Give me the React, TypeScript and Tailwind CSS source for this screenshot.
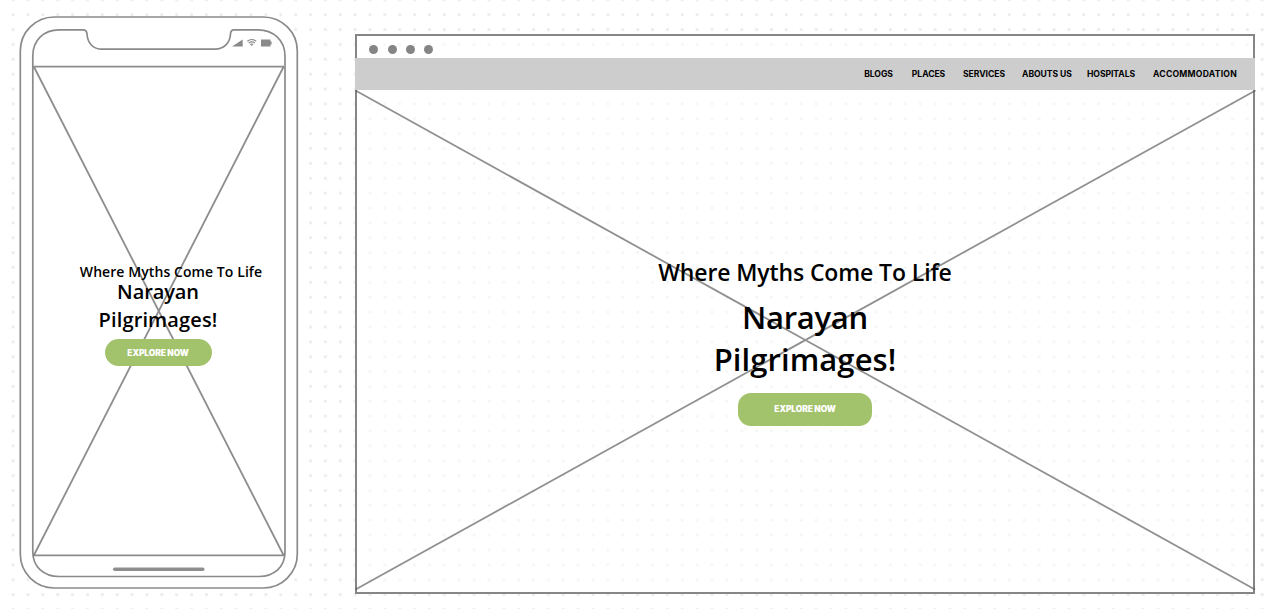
import React from "react";

const navItems = [
  { label: "BLOGS", style: "w-[29px] mr-[19px] tracking-[-0.05px]" },
  { label: "PLACES", style: "w-[33px] mr-[18px] tracking-[-0.05px]" },
  { label: "SERVICES", style: "w-[42px] mr-[17px] tracking-[-0.05px]" },
  { label: "ABOUTS US", style: "w-[50px] mr-[15px] tracking-[-0.05px]" },
  { label: "HOSPITALS", style: "w-[48px] mr-[18px] tracking-[-0.05px]" },
  { label: "ACCOMMODATION", style: "w-[84px] tracking-[0.24px]" },
];

function DotGrid() {
  return (
    <svg className="absolute inset-0 h-full w-full" aria-hidden="true">
      <defs>
        <pattern id="dots" x="5.7" y="7.25" width="14.87" height="14.87" patternUnits="userSpaceOnUse">
          <rect x="5.9" y="5.9" width="3" height="3" rx="0.8" fill="#ededef" />
        </pattern>
      </defs>
      <rect width="100%" height="100%" fill="url(#dots)" />
    </svg>
  );
}

function PhoneFrame() {
  return (
    <svg className="absolute inset-0" width="300" height="609" viewBox="0 0 300 609" fill="none" aria-hidden="true">
      <rect x="20.3" y="17" width="277" height="571" rx="34" fill="#fff" stroke="#8a8a8a" strokeWidth="1.7" />
      <path
        d="M59 29.8H83Q86.7 29.8 87 34C87.5 43 93 49.2 102 49.2H215C224 49.2 230 43 230.5 34Q230.7 29.8 234 29.8H258C273 29.8 285 40 285 56V552C285 567 274 576.5 259 576.5H59C44 576.5 32.8 567 32.8 552V56C32.8 40 44 29.8 59 29.8Z"
        stroke="#8a8a8a"
        strokeWidth="1.7"
      />
      <path
        d="M33.5 66.7H284M33.5 555.3H284M34 67L283.5 555M283.5 67L34 555"
        stroke="#555"
        strokeOpacity=".67"
        strokeWidth="1.8"
      />
      <path d="M114.8 569.3H202.7" stroke="#8e8e8e" strokeWidth="3.6" strokeLinecap="round" />
      <path d="M232 46.5L242.7 39.5V46.5Z" fill="#8a8a8a" />
      <path
        d="M247.3 41.2Q251.7 37.9 256.2 41.2M248.7 43Q251.7 40.8 254.8 43M250.2 44.6Q251.7 43.6 253.2 44.6"
        stroke="#8a8a8a"
        strokeWidth="1.1"
      />
      <path d="M250.8 45.3L251.7 46.3L252.7 45.3Z" fill="#8a8a8a" />
      <path d="M261 39.4H270.5V41.5H271.6V44.5H270.5V46.5H261Z" fill="#8a8a8a" />
    </svg>
  );
}

function Phone() {
  return (
    <section className="relative h-full w-[300px] shrink-0">
      <PhoneFrame />
      <div className="relative flex flex-col items-center pt-[266px] pl-[16px] text-center font-['Open_Sans',sans-serif] font-semibold text-black">
        <p className="ml-[26px] text-[14px] leading-3 tracking-[0.08px] whitespace-nowrap">Where Myths Come To Life</p>
        <h1 className="text-[20px] leading-7">
          <span className="tracking-[-0.1px]">Narayan</span>
          <br />
          <span className="tracking-[0.13px]">Pilgrimages!</span>
        </h1>
        <button className="mt-[5px] h-[27px] w-[107px] rounded-[13.5px] bg-[#a3c26c] font-['Inter',sans-serif] text-[8.4px] leading-[28px] font-black tracking-[-0.08px] text-white">
          EXPLORE NOW
        </button>
      </div>
    </section>
  );
}

function Browser() {
  return (
    <section className="relative mt-[34px] ml-[55px] flex h-[560px] w-[900px] shrink-0 flex-col">
      <div className="absolute inset-0 border-2 border-[#868686] bg-white/50" />
      <div className="relative flex h-[24px] items-center gap-[9.4px] pt-[7px] pl-[14.2px]">
        {[0, 1, 2, 3].map((dot) => (
          <span key={dot} className="size-[9px] rounded-full bg-[#858585]" />
        ))}
      </div>
      <nav className="relative flex h-[32px] items-center justify-end bg-[#cdcdcd] pr-[18px] font-['Inter',sans-serif] text-[8.6px] font-bold text-black">
        {navItems.map((item) => (
          <a key={item.label} className={`${item.style} flex justify-center whitespace-nowrap`}>
            {item.label}
          </a>
        ))}
      </nav>
      <div className="relative grow">
        <svg className="absolute top-0 left-0 overflow-visible" width="900" height="504" fill="none" aria-hidden="true">
          <path d="M.5 .5L900 499.5M900.5 .5L.5 499.5" stroke="#555" strokeOpacity=".65" strokeWidth="1.8" />
        </svg>
        <div className="relative flex flex-col items-center pt-[166px] text-center font-['Open_Sans',sans-serif] font-semibold text-black">
          <p className="text-[23px] leading-8 tracking-[-0.12px] whitespace-nowrap">Where Myths Come To Life</p>
          <h2 className="mt-[8px] text-[31px] leading-[42px]">
            <span className="tracking-[-0.3px]">Narayan</span>
            <br />
            <span className="tracking-[0.08px]">Pilgrimages!</span>
          </h2>
          <button className="mt-[13px] h-[33px] w-[134px] rounded-[13px] bg-[#a3c26c] font-['Inter',sans-serif] text-[8.4px] leading-[33px] font-black tracking-[-0.08px] text-white">
            EXPLORE NOW
          </button>
        </div>
      </div>
    </section>
  );
}

export default function App() {
  return (
    <main className="relative flex h-[609px] w-[1273px] overflow-hidden bg-white">
      <DotGrid />
      <Phone />
      <Browser />
    </main>
  );
}
